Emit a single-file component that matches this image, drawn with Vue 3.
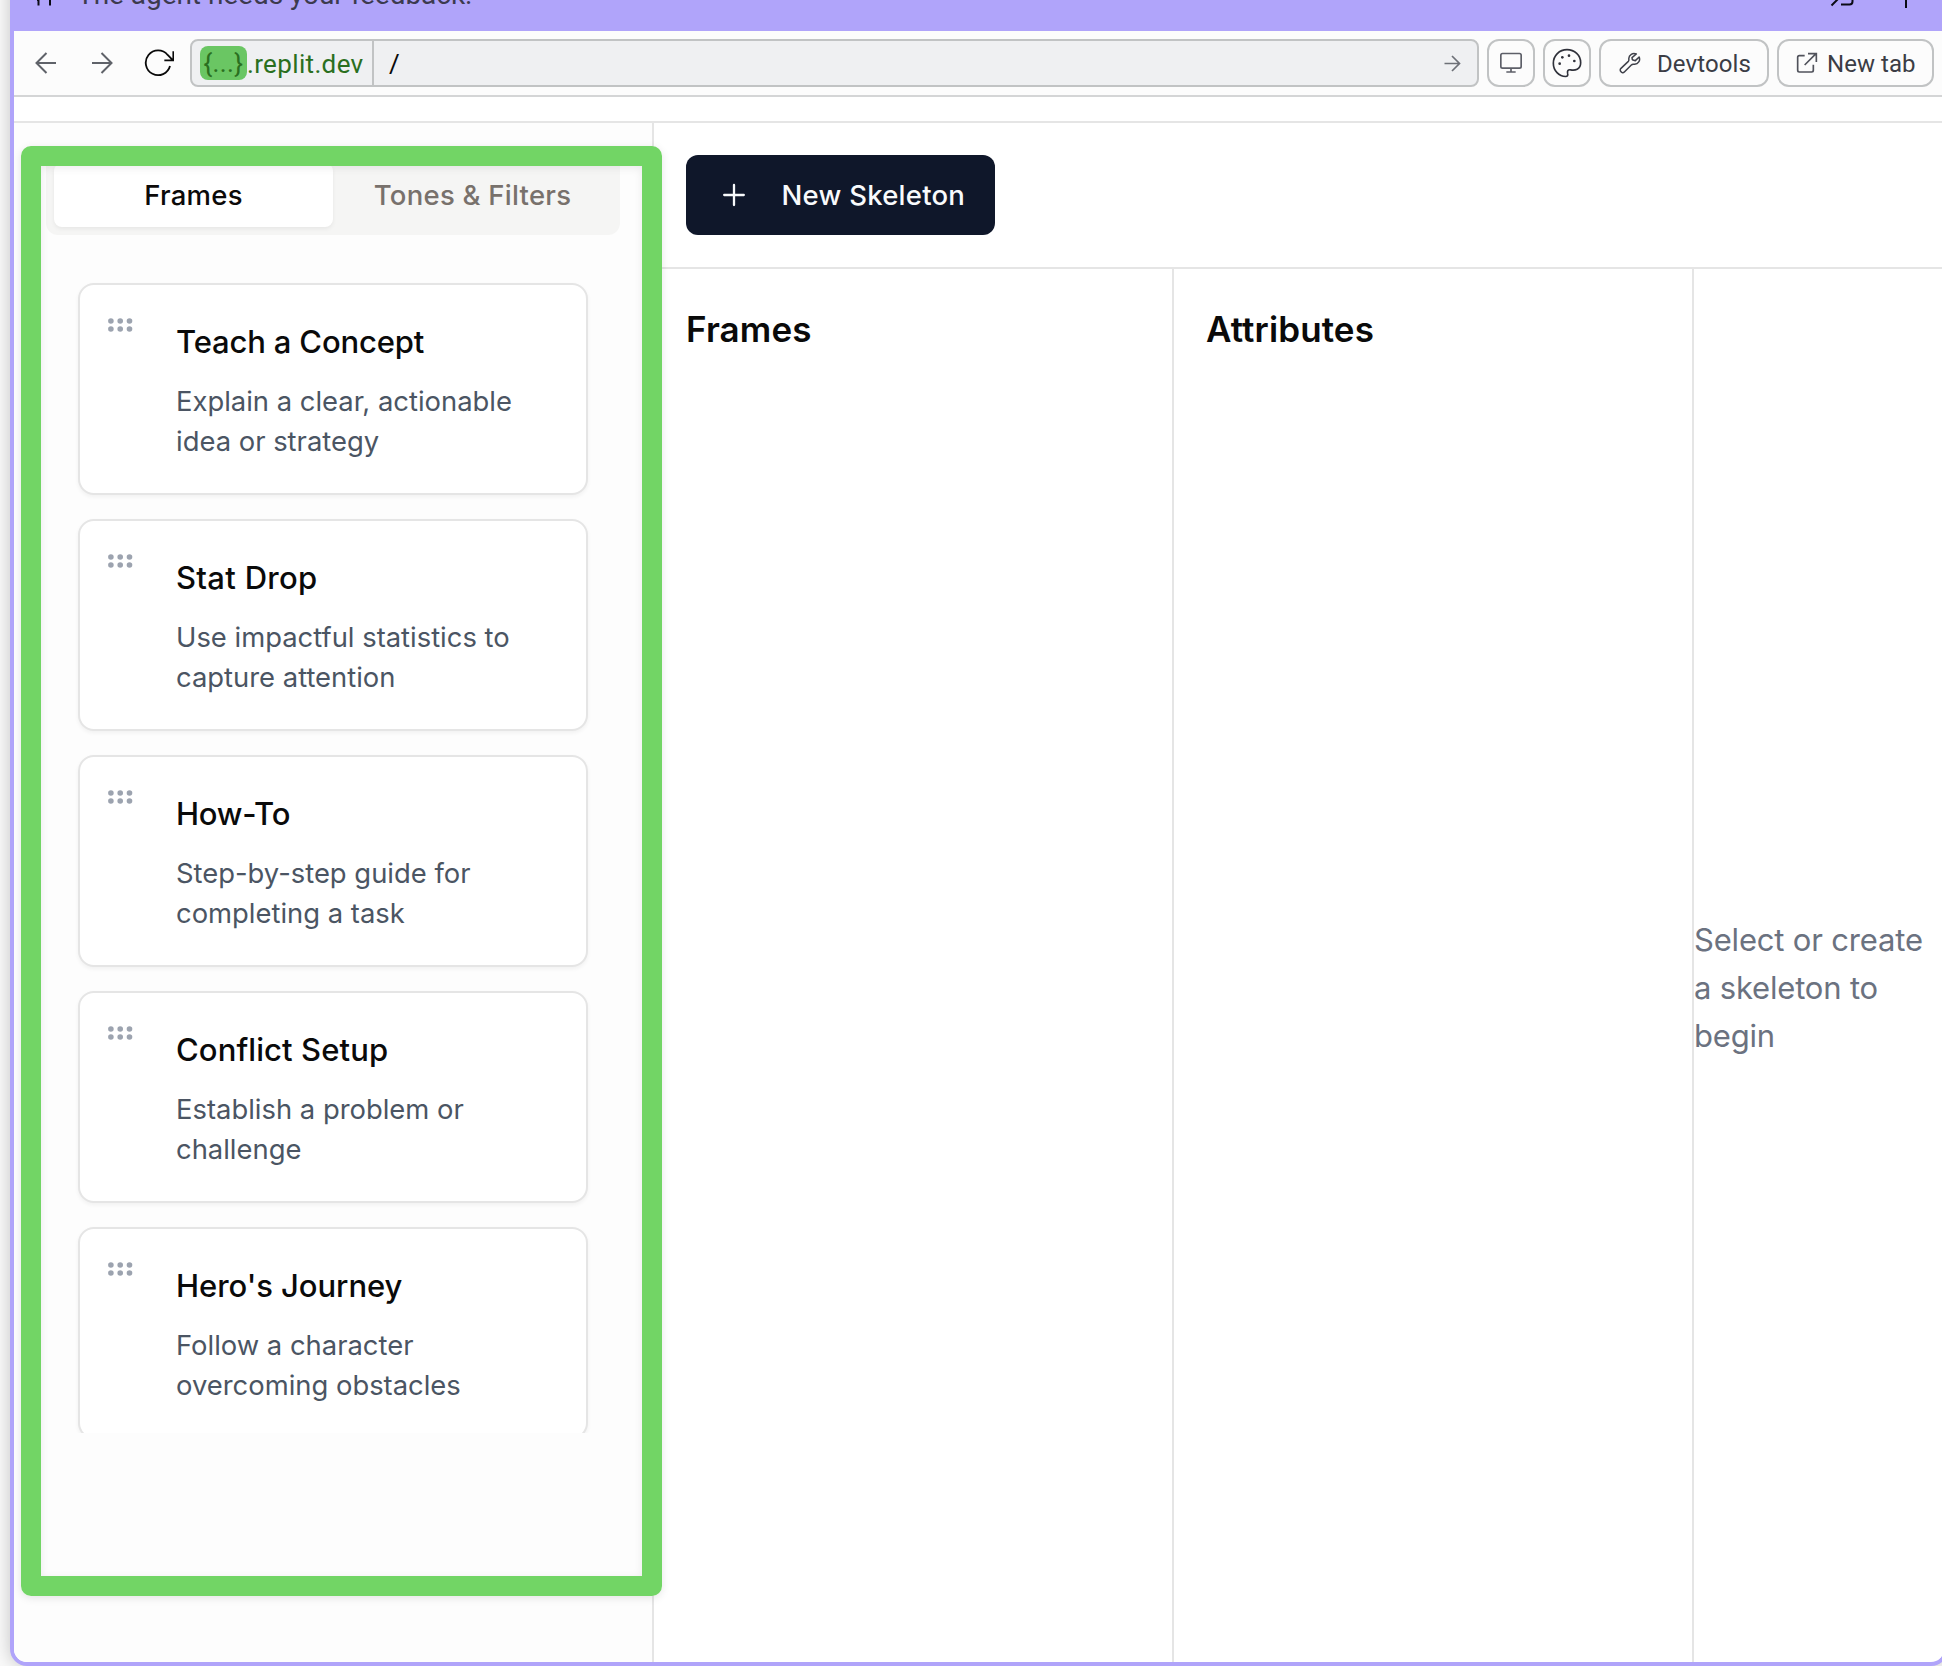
<script setup>
const frames = [
  { title: 'Teach a Concept', tracking: -0.16, lines: ['Explain a clear, actionable', 'idea or strategy'] },
  { title: 'Stat Drop', tracking: 0.3, lines: ['Use impactful statistics to', 'capture attention'] },
  { title: 'How-To', tracking: -0.24, lines: ['Step-by-step guide for', 'completing a task'] },
  { title: 'Conflict Setup', tracking: 0.1, lines: ['Establish a problem or', 'challenge'] },
  { title: "Hero's Journey", tracking: -0.06, lines: ['Follow a character', 'overcoming obstacles'] },
]
const dots = [0, 1, 2].flatMap((c) => [0, 1].map((r) => ({ x: 2.9 + c * 9.3, y: 3 + r * 8 })))
</script>

<template>
  <div class="desktop">
    <div class="window">
      <header class="notice">
        <svg class="pause" width="16" height="22" viewBox="0 0 16 22" fill="none" stroke="#0b0b14" stroke-width="2">
          <path d="M1.5 0v21.5M0 16h2M13 0v21.5" />
        </svg>
        <span class="notice-text">The agent needs your feedback.</span>
        <svg class="collapse" width="24" height="24" viewBox="0 0 24 24" fill="none" stroke="#0b0b14" stroke-width="2">
          <path d="M1.5 22.5 14 10M11 21.5h8.5a3 3 0 0 0 3-3V5" />
        </svg>
        <svg class="plus-top" width="24" height="28" viewBox="0 0 24 28" fill="none" stroke="#0b0b14" stroke-width="2">
          <path d="M12 2v25M0 14h24" />
        </svg>
      </header>

      <nav class="toolbar">
        <svg class="nav-back" width="22" height="22" viewBox="0 0 22 22" fill="none" stroke="#5f6269" stroke-width="2">
          <path d="M21 11H1.5M11.5 1 1.5 11l10 10" />
        </svg>
        <svg class="nav-forward" width="22" height="22" viewBox="0 0 22 22" fill="none" stroke="#5f6269" stroke-width="2">
          <path d="M1 11h19.500M10.500 1l10 10-10 10" />
        </svg>
        <svg class="nav-reload" width="30" height="28" viewBox="432 147 90 84" fill="none" stroke="#0a0a0a" stroke-width="5.500">
          <path d="M510 198A37 37 0 1 1 503 165L519 181M520 154v27H493" />
        </svg>

        <div class="url">
          <div class="host"><span class="chip">{...}</span><span class="domain">.replit.dev</span></div>
          <span class="path">/</span>
          <svg class="go" width="17" height="17" viewBox="0 0 17 17" fill="none" stroke="#6d7077" stroke-width="1.7">
            <path d="M.5 8.500h15M8 1l7.500 7.500L8 16" />
          </svg>
        </div>

        <button class="tool square">
          <svg width="24" height="22" viewBox="237 156 72 66" fill="none" stroke="#5d5f68" stroke-width="5">
            <rect x="242.500" y="160.500" width="61" height="44" rx="5" />
            <path d="M273 205v10M259 216h28" />
          </svg>
        </button>
        <button class="tool square">
          <svg width="30" height="30" viewBox="396 144 90 90" fill="none" stroke="#2f313a" stroke-width="5">
            <path d="M441 149C418 149 400 167 400 189.500S417 229 437 229.500C442 229.500 444.500 226 443 221C441 213 444 208 452 209.500C464 212 482 209 482 188C482 166 464 149 441 149Z" />
            <g fill="#2f313a" stroke="none">
              <circle cx="419" cy="191" r="4" /><circle cx="427" cy="172" r="4" />
              <circle cx="447" cy="167" r="4" /><circle cx="463" cy="183" r="4" />
            </g>
          </svg>
        </button>
        <button class="tool devtools">
          <svg width="22" height="22" viewBox="596 154 66 66" fill="none" stroke="#3f414a" stroke-width="4.500" stroke-linejoin="round">
            <path d="M648 160C637 155 626 163 625.500 173C625.300 177 626.500 179 624 182L602 203C596 209 605 221 612 214L633 193C636 190 639 191.500 643 191C653 190 661 180 656.500 169L645 180L636 177L635 171Z" />
          </svg>
          <span>Devtools</span>
        </button>
        <button class="tool newtab">
          <svg width="22" height="22" viewBox="1128 157 66 66" fill="none" stroke="#50525b" stroke-width="5">
            <path d="M1154 168h-16a5 5 0 0 0-5 5v39a5 5 0 0 0 5 5h37a5 5 0 0 0 5-5v-17M1154 196l34-34M1164 162h25v25" />
          </svg>
          <span>New tab</span>
        </button>
      </nav>

      <div class="page-top"></div>

      <main class="page">
        <aside class="sidebar">
          <div class="tabs">
            <div class="tab active">Frames</div>
            <div class="tab">Tones &amp; Filters</div>
          </div>
          <div class="scroll">
            <article v-for="f in frames" :key="f.title" class="card">
              <svg class="grip" width="25" height="14" viewBox="0 0 25 14" fill="#9ca3af">
                <circle v-for="(d, i) in dots" :key="i" :cx="d.x" :cy="d.y" r="2.800" />
              </svg>
              <div class="card-body">
                <h3 :style="{ letterSpacing: f.tracking + 'px' }">{{ f.title }}</h3>
                <p><template v-for="(l, i) in f.lines" :key="l"><br v-if="i" />{{ l }}</template></p>
              </div>
            </article>
          </div>
        </aside>

        <section class="workspace">
          <div class="actions">
            <button class="primary">
              <svg width="22" height="24" viewBox="0 0 22 24" fill="none" stroke="#f8fafc" stroke-width="2.300" stroke-linecap="round">
                <path d="M11 2v20M1.200 12h19.600" />
              </svg>
              <span>New Skeleton</span>
            </button>
          </div>
          <div class="columns">
            <div class="column"><h2>Frames</h2></div>
            <div class="column"><h2>Attributes</h2></div>
            <div class="empty"><p>Select or create<br />a skeleton to<br />begin</p></div>
          </div>
        </section>
      </main>
    </div>
    <div class="highlight"></div>
  </div>
</template>

<style>
body { margin: 0; }
</style>

<style scoped>
* { box-sizing: border-box; }
h2, h3, p { margin: 0; }
svg { display: block; flex: none; }
button { font: inherit; color: inherit; margin: 0; }

.desktop {
  position: relative;
  width: 1942px;
  height: 1666px;
  overflow: hidden;
  background: #fafafa;
  font-family: Inter, "Liberation Sans", sans-serif;
  color: #0a0a0a;
}
.window {
  display: flex;
  flex-direction: column;
  width: 1938px;
  height: 1708px;
  margin: -42px 0 0 10px;
  border: 4px solid #b0a4fa;
  border-top: 0;
  border-radius: 0 0 17px 17px;
  overflow: hidden;
  background: #fff;
  box-shadow: 0 0 18px rgba(0, 0, 0, 0.22);
}

.notice {
  display: flex;
  align-items: center;
  flex: none;
  height: 73px;
  margin: 0 -4px;
  padding-left: 27px;
  background: #b0a4fa;
  font-family: Roboto, "Liberation Sans", sans-serif;
  font-size: 28px;
  color: #3c3a4e;
}
.notice-text { margin-left: 24px; letter-spacing: -0.04px; }
.collapse { margin-left: auto; }
.plus-top { margin: 0 30px 0 40px; }

.toolbar {
  display: flex;
  align-items: center;
  flex: none;
  height: 66px;
  padding: 0 11px 0 21px;
  border-bottom: 2px solid #d4d5d6;
  background: #fcfcfc;
  font-family: Roboto, "Liberation Sans", sans-serif;
  font-size: 24px;
  color: #3b3d45;
}
.nav-forward { margin-left: 34px; }
.nav-reload { margin-left: 31px; }
.url {
  display: flex;
  align-items: center;
  flex: 1;
  height: 48px;
  margin: 0 8px 0 16px;
  padding: 0 16px 0 8px;
  border: 2px solid #c1c3c4;
  border-radius: 8px;
  background: #eff0f2;
  font-size: 26px;
}
.host {
  display: flex;
  align-items: center;
  width: 174px;
  height: 44px;
  border-right: 2px solid #c1c3c4;
  color: #2a6f20;
}
.chip {
  display: flex;
  align-items: center;
  justify-content: center;
  width: 47px;
  height: 34px;
  border-radius: 8px;
  background: #6ac663;
  letter-spacing: 0.4px;
}
.domain { margin-left: 0; padding-top: 1px; letter-spacing: 0.35px; white-space: nowrap; }
.path { margin-left: 15px; padding-top: 1px; color: #0a0a0a; }
.go { margin-left: auto; }
.tool {
  display: flex;
  align-items: center;
  flex: none;
  height: 48px;
  margin-right: 8px;
  padding: 0;
  border: 2px solid #c1c3c4;
  border-radius: 12px;
  background: #fcfcfc;
}
.tool span { padding-top: 1px; }
.tool.square { width: 48px; justify-content: center; }
.tool.devtools { width: 170px; padding-left: 18px; }
.devtools span { margin-left: 16px; letter-spacing: 0.1px; }
.tool.newtab { width: 157px; margin-right: -1px; padding-left: 17px; }
.newtab span { margin-left: 9px; letter-spacing: 0.05px; }

.page-top { flex: none; height: 26px; border-bottom: 2px solid #e5e5e5; }

.page { display: flex; flex: 1; min-height: 0; }
.sidebar {
  flex: none;
  width: 640px;
  padding: 32px 32px 0;
  border-right: 2px solid #e5e5e5;
  background: #fdfdfd;
}
.tabs {
  display: flex;
  width: 574px;
  height: 80px;
  padding: 8px;
  border-radius: 12px;
  background: #f5f5f4;
}
.tab {
  display: flex;
  align-items: center;
  justify-content: center;
  flex: 1;
  border-radius: 8px;
  font-size: 27.500px;
  font-weight: 450;
  letter-spacing: 0.25px;
  color: #78716c;
}
.tab.active {
  background: #fff;
  color: #0c0a09;
  box-shadow: 0 2px 4px rgba(0, 0, 0, 0.06);
}
.scroll {
  display: flex;
  flex-direction: column;
  gap: 24px;
  width: 574px;
  height: 1182px;
  margin-top: 16px;
  padding: 32px;
  overflow: hidden;
}
.card {
  display: flex;
  flex: none;
  height: 212px;
  padding: 32px 26px;
  border: 2px solid #e5e5e5;
  border-radius: 16px;
  background: #fff;
  box-shadow: 0 2px 4px rgba(0, 0, 0, 0.05);
}
.grip { margin: 1px 43px 0 2px; }
.card-body { white-space: nowrap; }
.card h3 {
  padding-top: 1px;
  font-size: 31px;
  line-height: 48px;
  font-weight: 500;
}
.card p {
  margin-top: 15px;
  font-size: 27.400px;
  line-height: 40px;
  letter-spacing: 0;
  color: #4b5563;
}

.workspace { display: flex; flex-direction: column; flex: 1; min-width: 0; }
.actions { flex: none; height: 146px; padding: 32px; border-bottom: 2px solid #e5e5e5; }
.primary {
  display: flex;
  align-items: center;
  width: 309px;
  height: 80px;
  padding: 0 0 0 37px;
  border: 0;
  border-radius: 12px;
  background: #0f172a;
  color: #f8fafc;
  font-size: 27.500px;
  font-weight: 450;
}
.primary span { margin-left: 36.500px; letter-spacing: 0.25px; }
.columns { display: flex; flex: 1; min-height: 0; }
.column { flex: none; width: 520px; padding: 32px; border-right: 2px solid #e5e5e5; }
.column h2 { font-size: 35px; line-height: 56px; font-weight: 600; letter-spacing: 0.12px; }
.empty { display: flex; align-items: center; flex: none; height: 1437px; }
.empty p {
  font-size: 31px;
  line-height: 48px;
  letter-spacing: -0.18px;
  color: #6b7280;
  white-space: nowrap;
}

/* Annotation rectangle lying over the sidebar */
.highlight {
  position: absolute;
  left: 21px;
  top: 146px;
  width: 641px;
  height: 1450px;
  border: 20px solid #72d565;
  border-radius: 10px;
  box-shadow: 0 2px 8px rgba(0, 0, 0, 0.1), inset 0 2px 8px rgba(0, 0, 0, 0.08);
}
</style>
